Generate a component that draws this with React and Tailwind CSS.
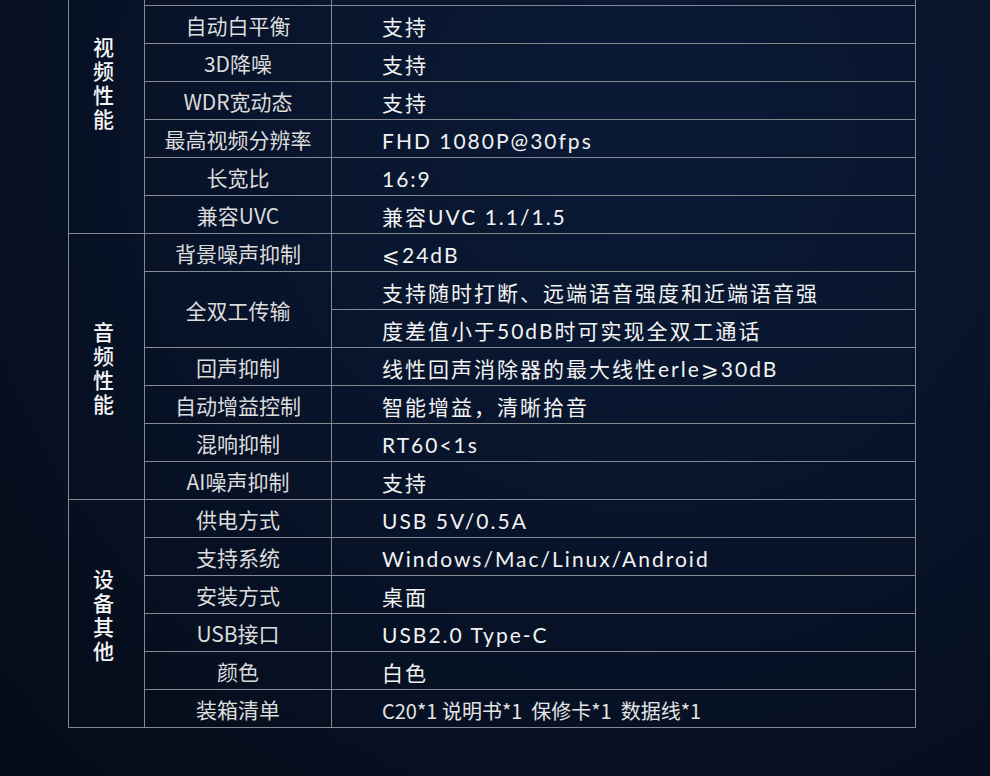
const groups = [
  {
    label: '视频性能',
    rows: [
      { key: '视场角', values: ['90°'] },
      { key: '对焦方式', values: ['定焦'] },
      { key: '自动白平衡', values: ['支持'] },
      { key: '3D降噪', values: ['支持'] },
      { key: 'WDR宽动态', values: ['支持'] },
      { key: '最高视频分辨率', values: ['FHD 1080P@30fps'] },
      { key: '长宽比', values: ['16:9'] },
      { key: '兼容UVC', values: ['兼容UVC 1.1/1.5'] },
    ],
  },
  {
    label: '音频性能',
    rows: [
      { key: '背景噪声抑制', values: ['≤24dB'] },
      { key: '全双工传输', values: ['支持随时打断、远端语音强度和近端语音强', '度差值小于50dB时可实现全双工通话'] },
      { key: '回声抑制', values: ['线性回声消除器的最大线性erle≥30dB'] },
      { key: '自动增益控制', values: ['智能增益，清晰拾音'] },
      { key: '混响抑制', values: ['RT60<1s'] },
      { key: 'AI噪声抑制', values: ['支持'] },
    ],
  },
  {
    label: '设备其他',
    rows: [
      { key: '供电方式', values: ['USB 5V/0.5A'] },
      { key: '支持系统', values: ['Windows/Mac/Linux/Android'] },
      { key: '安装方式', values: ['桌面'] },
      { key: 'USB接口', values: ['USB2.0 Type-C'] },
      { key: '颜色', values: ['白色'] },
      { key: '装箱清单', values: ['C20*1 说明书*1  保修卡*1  数据线*1'], plain: true },
    ],
  },
];

// the comparison signs come out tiny in Lato, use the CJK ones
const ValueText = ({ text }) => {
  const parts = text.split(/([≤≥])/);
  return parts.map((p, i) =>
    p === '≤' || p === '≥' ? (
      <span key={i} className="font-['Noto_Sans_CJK_SC',sans-serif]">
        {p === '≤' ? '⩽' : '⩾'}
      </span>
    ) : (
      <span key={i}>{p}</span>
    )
  );
};

const SpecRow = ({ row }) => {
  return (
    <div className="flex">
      <div className="w-[187px] shrink-0 border-r border-b border-[#85888f] flex items-center justify-center pt-[2px] text-[21px] text-[#dcdcdc]">
        {row.key}
      </div>
      <div className="flex-1 flex flex-col">
        {row.values.map((v) => (
          <div
            key={v}
            className={`h-[38px] border-b border-[#85888f] flex items-center pl-[50px] pt-[5px] whitespace-pre ${
              row.plain
                ? 'text-[20px] tracking-normal text-[#e4e4e4]'
                : "text-[21px] tracking-[2px] text-[#f2f2f2] font-['Lato','Noto_Sans_CJK_SC',sans-serif]"
            }`}
          >
            <ValueText text={v} />
          </div>
        ))}
      </div>
    </div>
  );
};

const SpecGroup = ({ group }) => {
  return (
    <div className="flex">
      <div className="w-[76px] shrink-0 border-r border-b border-[#85888f] flex items-center justify-center pr-[6px]">
        <div className="flex flex-col items-center text-[21px] leading-[24px] text-[#f5f5f5] font-medium">
          {group.label.split('').map((c, i) => (
            <span key={i}>{c}</span>
          ))}
        </div>
      </div>
      <div className="flex-1 flex flex-col">
        {group.rows.map((row) => (
          <SpecRow key={row.key} row={row} />
        ))}
      </div>
    </div>
  );
};

export default function App() {
  return (
    <div
      className="h-[776px] w-[990px] overflow-hidden bg-[radial-gradient(ellipse_at_65%_15%,#0a1a36_0%,#08142b_45%,#050b17_100%)]"
      style={{ fontFamily: '"Noto Sans CJK SC", "Noto Sans", sans-serif' }}
    >
      <div className="mt-[-71px] ml-[68px] w-[848px] border-l border-r border-t border-[#85888f] flex flex-col">
        {groups.map((g) => (
          <SpecGroup key={g.label} group={g} />
        ))}
      </div>
    </div>
  );
}
